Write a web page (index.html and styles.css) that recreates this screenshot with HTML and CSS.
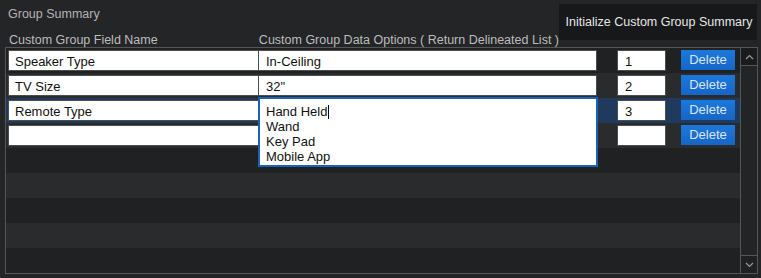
FILE: index.html
```html
<!DOCTYPE html>
<html>
<head>
<meta charset="utf-8">
<link rel="stylesheet" href="styles.css">
</head>
<body>
<div class="page">
  <div class="top">
    <div class="heads">
      <div class="title">Group Summary</div>
      <div class="cols">
        <span class="col-name">Custom Group Field Name</span>
        <span class="col-data">Custom Group Data Options ( Return Delineated List )</span>
      </div>
    </div>
    <div class="init">Initialize Custom Group Summary</div>
  </div>
  <div class="grid">
    <div class="rows">
      <div class="row">
        <div class="field">Speaker Type</div>
        <div class="data">In-Ceiling</div>
        <div class="order">1</div>
        <div class="del">Delete</div>
      </div>
      <div class="row alt">
        <div class="field">TV Size</div>
        <div class="data">32"</div>
        <div class="order">2</div>
        <div class="del">Delete</div>
      </div>
      <div class="row sel">
        <div class="field">Remote Type</div>
        <div class="data-spacer"></div>
        <div class="order">3</div>
        <div class="del">Delete</div>
        <div class="popup">
          <div>Hand Held<span class="caret"></span></div>
          <div>Wand</div>
          <div>Key Pad</div>
          <div>Mobile App</div>
        </div>
      </div>
      <div class="row alt">
        <div class="field"></div>
        <div class="data"></div>
        <div class="order"></div>
        <div class="del">Delete</div>
      </div>
      <div class="row"></div>
      <div class="row alt"></div>
      <div class="row"></div>
      <div class="row alt"></div>
      <div class="row"></div>
    </div>
    <div class="scroll">
      <div class="sbtn up"><svg width="9" height="6" viewBox="0 0 9 6"><path d="M1 5 L4.5 1.5 L8 5" fill="none" stroke="#9a9a9a" stroke-width="1.2"/></svg></div>
      <div class="track"></div>
      <div class="sbtn down"><svg width="9" height="6" viewBox="0 0 9 6"><path d="M1 1 L4.5 4.5 L8 1" fill="none" stroke="#9a9a9a" stroke-width="1.2"/></svg></div>
    </div>
  </div>
</div>
</body>
</html>
```
FILE: styles.css
```css
html, body {
  margin: 0;
  padding: 0;
}
body {
  background: #242527;
  font-family: "Liberation Sans", Arial, sans-serif;
  font-size: 13px;
  width: 761px;
  height: 278px;
  overflow: hidden;
}
.page {
  padding: 4px 0 0 5px;
}
.top {
  display: flex;
  height: 43px;
  width: 752px;
}
.heads {
  flex: 1;
  display: flex;
  flex-direction: column;
  white-space: nowrap;
  min-width: 0;
}
.title {
  color: #b4b4b4;
  font-size: 12.5px;
  padding: 3px 0 0 3px;
  height: 20px;
}
.cols {
  display: flex;
  color: #bdbdbd;
  font-size: 12.5px;
  padding-top: 9px;
}
.col-name {
  width: 251px;
  padding-left: 4px;
}
.init {
  flex: none;
  background: #17181a;
  color: #e6e6e6;
  font-size: 12.5px;
  white-space: nowrap;
  width: 198px;
  height: 36px;
  line-height: 36px;
  text-align: center;
  box-sizing: border-box;
  padding-left: 2px;
}
.grid {
  display: flex;
  border: 1px solid #555657;
  width: 751px;
  height: 225px;
  background: #202122;
}
.rows {
  width: 734px;
  flex: none;
  display: flex;
  flex-direction: column;
}
.row {
  position: relative;
  height: 25px;
  flex: none;
  display: flex;
  align-items: flex-start;
  padding: 2px 0 0 2px;
  box-sizing: border-box;
  background: #202122;
}
.row.alt {
  background: #2a2b2c;
}
.row.sel {
  background: #1f3a5c;
}
.field, .data, .order {
  height: 21px;
  box-sizing: border-box;
  border: 1px solid #4c4d4f;
  background: #ffffff;
  color: #111;
  line-height: 19px;
  padding: 1px 0 0 6px;
}
.field {
  width: 251px;
}
.data, .data-spacer {
  width: 339px;
  margin-left: -1px;
}
.data {
  padding-left: 7px;
}
.order {
  width: 49px;
  margin-left: 20px;
  padding-left: 7px;
}
.del {
  width: 54px;
  height: 20px;
  margin-left: 15px;
  background: linear-gradient(#1d78dc, #1566c6);
  color: #dde6f2;
  text-align: center;
  line-height: 20px;
}
.popup {
  position: absolute;
  left: 252px;
  top: -1px;
  width: 340px;
  height: 70px;
  box-sizing: border-box;
  border: 2px solid #1a62b8;
  background: #ffffff;
  color: #111;
  padding: 5px 0 0 6px;
  line-height: 15px;
  z-index: 2;
}
.caret {
  display: inline-block;
  width: 1px;
  height: 14px;
  background: #000;
  vertical-align: -3px;
  margin-left: 1px;
}
.scroll {
  width: 16px;
  flex: none;
  border-left: 1px solid #555657;
  display: flex;
  flex-direction: column;
  background: #232425;
}
.sbtn {
  height: 17px;
  flex: none;
  display: flex;
  align-items: center;
  justify-content: center;
  background: #1a1b1c;
}
.sbtn.up {
  border-bottom: 1px solid #555657;
}
.sbtn.down {
  border-top: 1px solid #555657;
  background: #202122;
}
.track {
  flex: 1;
}
```
